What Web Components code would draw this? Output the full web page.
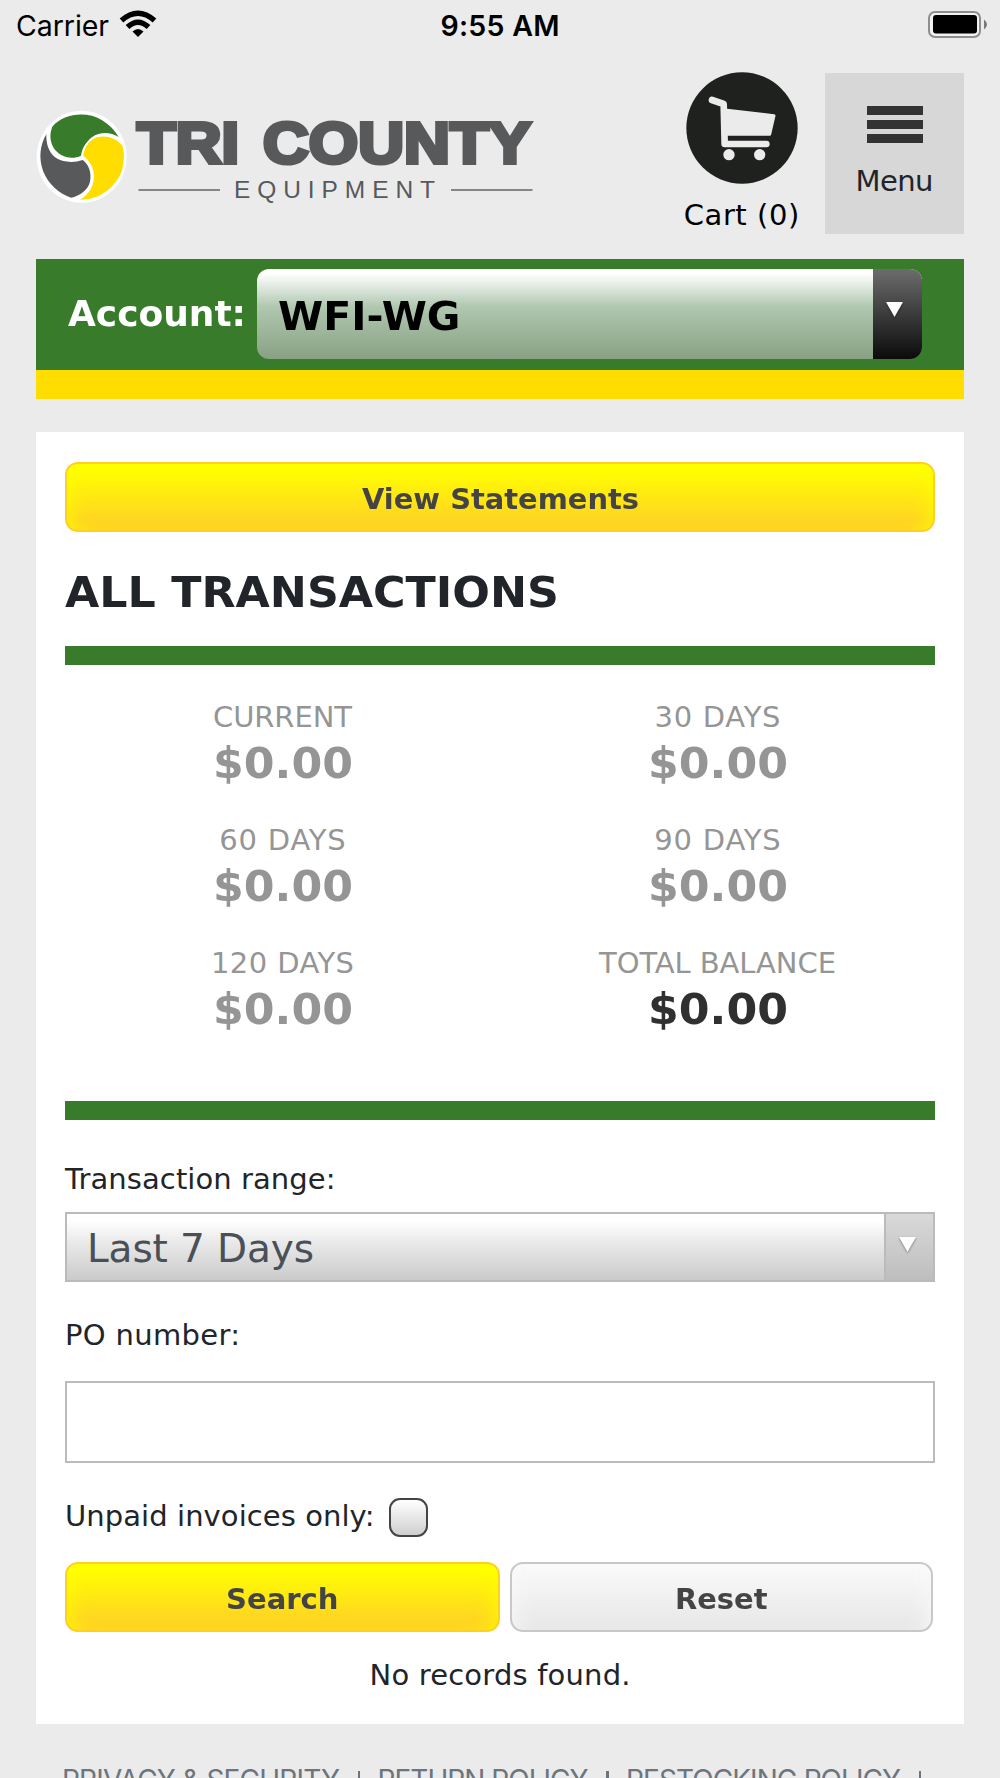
<!DOCTYPE html>
<html lang="en">
<head>
<meta charset="utf-8">
<title>Tri County Equipment - Transactions</title>
<style>
    html, body {
        margin: 0;
        height: 1778px;
        overflow: hidden;
    }
    body {
        background: #ebebeb;
        color: #212529;
        font: 29px/30px "DejaVu Sans", Verdana, sans-serif;
    }
</style>
</head>
<body>
<account-page></account-page>

<script>
const define = (name, html, setup) => {
    const template = document.createElement('template');
    template.innerHTML = html;
    customElements.define(name, class extends HTMLElement {
        constructor() {
            super();
            this.attachShadow({ mode: 'open' }).appendChild(template.content.cloneNode(true));
        }
        connectedCallback() {
            if (setup) setup(this);
        }
    });
};

// Text fitted to a given width: tracked by default, stretched with the "stretch" attribute
define('fit-text', `
    <style>
        :host {
            display: inline-block;
            white-space: nowrap;
            text-align: left;
            vertical-align: top;
        }
        span {
            display: inline-block;
            vertical-align: top;
            transform-origin: 0 0;
        }
    </style>
    <span><slot></slot></span>
`, el => {
    const width = Number(el.getAttribute('width'));
    const span = el.shadowRoot.querySelector('span');
    const natural = span.getBoundingClientRect().width;
    if (el.hasAttribute('stretch')) {
        span.style.transform = `scaleX(${width / natural})`;
    } else {
        el.style.letterSpacing = (width - natural) / (el.textContent.trim().length - 1) + 'px';
    }
    el.style.width = width + 'px';
});

define('status-bar', `
    <style>
        :host {
            display: grid;
            grid-template-columns: 1fr auto 1fr;
            height: 51px;
            line-height: 51px;
            color: #000;
            font-family: Inter, sans-serif;
            font-size: 28.5px;
        }
        .left {
            display: flex;
            gap: 10px;
            padding-left: 16px;
        }
        .time {
            font-weight: 600;
        }
        .right {
            display: flex;
            justify-content: flex-end;
            padding: 11px 12px 0 0;
        }
        svg {
            display: block;
        }
        .wifi {
            margin-top: 10px;
        }
    </style>
    <div class="left">
        <fit-text width="93">Carrier</fit-text>
        <svg class="wifi" width="38" height="28" viewBox="0 0 38 28">
            <path d="M2.500 10.500Q19 -4 35.500 10.500" fill="none" stroke="#000" stroke-width="5.500"/>
            <path d="M8.500 17Q19 7.500 29.500 17" fill="none" stroke="#000" stroke-width="5.500"/>
            <path d="M13.500 21.500Q19 16.500 24.500 21.500L19 27Z"/>
        </svg>
    </div>
    <div class="time"><fit-text width="119">9:55 AM</fit-text></div>
    <div class="right">
        <svg width="60" height="27" viewBox="0 0 60 27">
            <rect x="1" y="1" width="51" height="25" rx="6" fill="#f3f3f3" stroke="#8e8e8e" stroke-width="2"/>
            <rect x="5" y="4" width="44" height="18.500" rx="3"/>
            <path d="M56 8.500Q59 11 59 13.500T56 18.500Z" fill="#777"/>
        </svg>
    </div>
`);

define('site-logo', `
    <style>
        :host {
            display: block;
        }
        svg {
            display: block;
        }
        text {
            font-family: "Liberation Sans", Arial, sans-serif;
            fill: #58595b;
        }
    </style>
    <svg width="504" height="100" viewBox="36 107 504 100">
        <g transform="translate(20 100) scale(.33333)">
            <ellipse cx="185" cy="170.500" rx="135" ry="138" fill="#fff"/>
            <path fill="#387c2b" d="M97 80C130 40 200 32 245 60C270 75 285 92 296 111C270 95 240 96 218 110C198 124 186 145 183 167C150 182 115 168 99 140C89 120 89 100 97 80Z"/>
            <path fill="#58595b" d="M79 103C78 130 85 155 105 172C125 187 160 190 188 180C208 195 215 220 210 245C205 268 180 288 153 293C115 280 85 250 70 215C55 175 60 135 79 103Z"/>
            <path fill="#ffdd00" d="M190 168C192 145 205 122 230 112C262 104 290 115 307 137C315 160 312 190 305 215C285 262 240 300 180 299C210 282 222 255 222 228C221 203 210 182 190 168Z"/>
        </g>
        <text x="137" y="163" font-size="57" font-weight="700" stroke="#58595b" stroke-width="4" textLength="102" lengthAdjust="spacingAndGlyphs">TRI</text>
        <text x="263" y="163" font-size="57" font-weight="700" stroke="#58595b" stroke-width="4" textLength="268" lengthAdjust="spacingAndGlyphs">COUNTY</text>
        <text x="234" y="198" font-size="24.500" letter-spacing="7" textLength="208">EQUIPMENT</text>
        <path d="M138.500 190H220M451 190H532.500" stroke="#858688" stroke-width="2"/>
    </svg>
`);

define('cart-link', `
    <style>
        :host {
            display: flex;
            flex-direction: column;
            align-items: center;
            width: 116px;
            color: #000;
        }
        svg {
            display: block;
            margin: -1px 0 16px;
        }
    </style>
    <svg width="112" height="112" viewBox="77 216 336 336">
        <circle cx="245" cy="384" r="167" fill="#1f211f"/>
        <g fill="#ebebeb" stroke="#ebebeb" stroke-linecap="round" stroke-linejoin="round">
            <path d="M155 300L190 312L193 432H318" fill="none" stroke-width="20"/>
            <path d="M200 331L341 347L328 403H202Z" stroke-width="9"/>
            <circle cx="206" cy="464" r="17" stroke="none"/>
            <circle cx="298" cy="464" r="17" stroke="none"/>
        </g>
    </svg>
    <fit-text width="115.5">Cart (0)</fit-text>
`);

define('menu-button', `
    <style>
        :host {
            display: flex;
            flex-direction: column;
            align-items: center;
            box-sizing: border-box;
            width: 139px;
            height: 161px;
            padding-top: 33px;
            background: #d7d7d7;
        }
        .bars {
            display: grid;
            gap: 5.500px;
            margin-bottom: 23px;
        }
        i {
            width: 56px;
            height: 8.500px;
            background: #333;
        }
    </style>
    <div class="bars"><i></i><i></i><i></i></div>
    <fit-text width="78">Menu</fit-text>
`);

define('site-header', `
    <style>
        :host {
            display: flex;
            height: 185px;
            padding: 22px 36px 0;
            box-sizing: border-box;
        }
        site-logo {
            margin-top: 34px;
        }
        cart-link {
            margin-left: auto;
            margin-right: 25.500px;
        }
    </style>
    <site-logo></site-logo>
    <cart-link></cart-link>
    <menu-button></menu-button>
`);

define('select-box', `
    <style>
        :host {
            display: flex;
            box-sizing: border-box;
            height: 70px;
            border: 2px solid #bbb;
            background: linear-gradient(#fff 10%, #e8e8e8 45%, #cbcbcb);
            color: #495057;
            font-size: 39px;
            line-height: 70px;
        }
        .value {
            flex: 1;
            padding-left: 20px;
        }
        .arrow {
            box-sizing: border-box;
            width: 49px;
            padding: 23px 0 0 12.500px;
            border-left: 2px solid #bbb;
            background: linear-gradient(#d9d9d9, #bebebe);
        }
        svg {
            display: block;
            filter: drop-shadow(0 1px 1px rgba(0, 0, 0, .4));
        }
        :host([dark]) {
            height: 89.500px;
            border: 0;
            border-radius: 12px;
            overflow: hidden;
            background: linear-gradient(#fff 5%, #b0c7b0 42%, #88a183);
            color: #000;
            font-weight: 700;
            line-height: 95px;
        }
        :host([dark]) .value {
            padding-left: 21px;
        }
        :host([dark]) .arrow {
            padding: 33px 0 0 13px;
            border: 0;
            background: linear-gradient(#6c6c6c, #0b0b0b);
        }
    </style>
    <div class="value"><slot></slot></div>
    <div class="arrow">
        <svg width="17" height="15" viewBox="0 0 17 15"><path d="M0 0H17L8.500 15Z" fill="#fff"/></svg>
    </div>
`);

define('account-bar', `
    <style>
        :host {
            display: flex;
            box-sizing: border-box;
            height: 140.500px;
            margin: 22.500px 36px 33px;
            padding: 10.500px 42.500px 0 32px;
            border-bottom: 29px solid #ffdd00;
            background: #387c2b;
        }
        .label {
            width: 189px;
            color: #fff;
            font-size: 36.200px;
            font-weight: 700;
            line-height: 89px;
        }
        select-box {
            flex: 1;
        }
    </style>
    <div class="label"><fit-text stretch width="178">Account:</fit-text></div>
    <select-box dark><fit-text stretch width="182.5">WFI-WG</fit-text></select-box>
`);

define('push-button', `
    <style>
        :host {
            display: block;
            box-sizing: border-box;
            height: 70.500px;
            border: 2.500px solid #ffd022;
            border-radius: 13px;
            background: linear-gradient(#ff0 8%, #ffd621 82%);
            box-shadow: inset 20px 0 24px -20px #ff0, inset -20px 0 24px -20px #ff0;
            color: #444;
            font-weight: 700;
            line-height: 71px;
            text-align: center;
        }
        :host([plain]) {
            border-color: #c8c8c8;
            background: linear-gradient(#fafafa, #e7e7e7);
            box-shadow: inset 20px 0 24px -20px #fafafa, inset -20px 0 24px -20px #fafafa;
        }
    </style>
    <slot></slot>
`);

define('aging-cell', `
    <style>
        :host {
            display: block;
            height: 123px;
            color: #959595;
            text-align: center;
        }
        .label {
            line-height: 44px;
        }
        .value {
            font-size: 43.500px;
            font-weight: 700;
            line-height: 48px;
        }
        :host([total]) .value {
            color: #303030;
        }
    </style>
    <div class="label"><slot></slot></div>
    <div class="value"><fit-text stretch width="140">$0.00</fit-text></div>
`);

define('aging-summary', `
    <style>
        :host {
            display: grid;
            grid-template-columns: 1fr 1fr;
            padding: 30px 0 37.500px;
            border-top: 19.500px solid #387c2b;
            border-bottom: 19.500px solid #387c2b;
        }
    </style>
    <aging-cell><fit-text width="139">CURRENT</fit-text></aging-cell>
    <aging-cell><fit-text width="126">30 DAYS</fit-text></aging-cell>
    <aging-cell><fit-text width="126.5">60 DAYS</fit-text></aging-cell>
    <aging-cell><fit-text width="126.5">90 DAYS</fit-text></aging-cell>
    <aging-cell><fit-text width="143">120 DAYS</fit-text></aging-cell>
    <aging-cell total><fit-text width="237">TOTAL BALANCE</fit-text></aging-cell>
`);

define('transaction-search', `
    <style>
        :host {
            display: block;
            padding-top: 43.500px;
        }
        .label {
            height: 30px;
        }
        select-box {
            margin: 18px 0 38px;
        }
        .po {
            box-sizing: border-box;
            height: 82px;
            margin: 31px 0 35px;
            border: 2px solid #bbb;
        }
        .unpaid {
            display: flex;
            height: 39px;
            line-height: 37px;
            margin-bottom: 25px;
        }
        .check {
            box-sizing: border-box;
            width: 39px;
            height: 39px;
            margin-left: 14.500px;
            border: 2.500px solid #444;
            border-radius: 11px;
            background: linear-gradient(#fff, #cfcfcf);
        }
        .buttons {
            display: grid;
            grid-template-columns: 435px 423px;
            gap: 10px;
        }
        .empty {
            margin-top: 27.500px;
            text-align: center;
        }
    </style>
    <div class="label"><fit-text width="270.5">Transaction range:</fit-text></div>
    <select-box><fit-text width="227">Last 7 Days</fit-text></select-box>
    <div class="label"><fit-text width="175">PO number:</fit-text></div>
    <div class="po"></div>
    <div class="unpaid">
        <fit-text width="309.5">Unpaid invoices only:</fit-text>
        <div class="check"></div>
    </div>
    <div class="buttons">
        <push-button><fit-text stretch width="112.5">Search</fit-text></push-button>
        <push-button plain><fit-text stretch width="92.5">Reset</fit-text></push-button>
    </div>
    <div class="empty"><fit-text width="261">No records found.</fit-text></div>
`);

define('page-footer', `
    <style>
        :host {
            display: flex;
            margin-top: 38px;
            padding-left: 62px;
            color: #6c757d;
            font-family: Inter, sans-serif;
            font-size: 28px;
            line-height: 37.500px;
            white-space: nowrap;
        }
        i {
            width: 2.500px;
            height: 25px;
            margin: 9px 17.500px 0;
            background: #6c757d;
        }
    </style>
    <fit-text width="278">PRIVACY &amp; SECURITY</fit-text><i></i>
    <fit-text width="211">RETURN POLICY</fit-text><i></i>
    <fit-text width="275">RESTOCKING POLICY</fit-text><i></i>
`);

define('account-page', `
    <style>
        :host {
            display: block;
        }
        main {
            box-sizing: border-box;
            height: 1292px;
            margin: 0 36px;
            padding: 29.500px 29px;
            background: #fff;
        }
        h1 {
            margin: 5.500px 0 0;
            font-size: 43.500px;
            line-height: 108px;
        }
    </style>
    <status-bar></status-bar>
    <site-header></site-header>
    <account-bar></account-bar>
    <main>
        <push-button><fit-text stretch width="277">View Statements</fit-text></push-button>
        <h1><fit-text stretch width="494">ALL TRANSACTIONS</fit-text></h1>
        <aging-summary></aging-summary>
        <transaction-search></transaction-search>
    </main>
    <page-footer></page-footer>
`);
</script>
</body>
</html>
